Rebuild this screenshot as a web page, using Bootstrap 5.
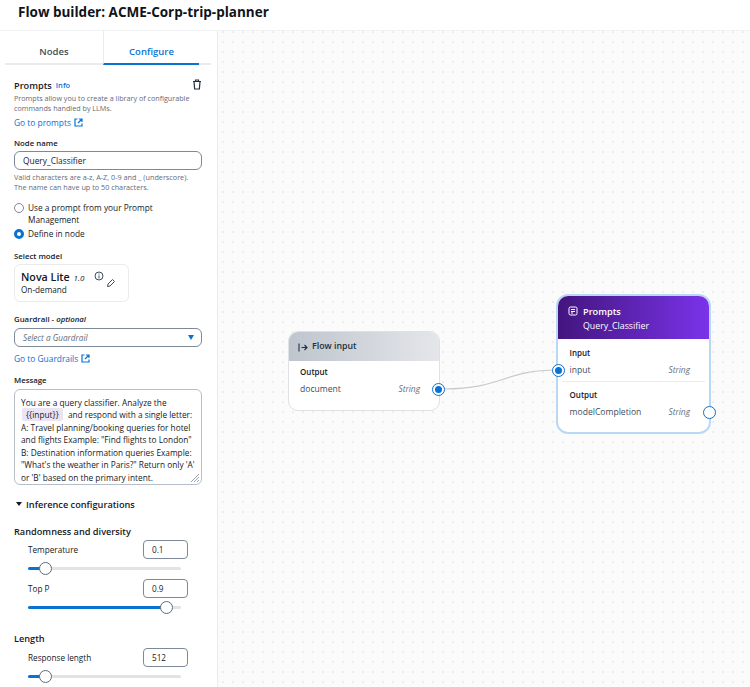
<!DOCTYPE html>
<html lang="en">
<head>
<meta charset="utf-8">
<title>Flow builder</title>
<link href="https://cdn.jsdelivr.net/npm/bootstrap@5.3.0/dist/css/bootstrap.min.css" rel="stylesheet">
<style>
html,body{height:100%;overflow:hidden;}
body{font-family:"Open Sans","Noto Sans",sans-serif;color:#16191f;background:#fff;width:750px;height:687px;position:relative;}
.titlebar{height:31px;padding:1px 0 0 18px;font-size:13.5px;font-weight:700;line-height:22px;color:#0f141a;border-bottom:1px solid #f0f1f2;}
.shell{height:656px;display:flex;overflow:hidden;}
.sidepane{width:218px;flex:none;height:656px;overflow:hidden;border-right:1px solid #e9ebed;padding:0 5px 0 5px;}
.canvasarea{flex:1;position:relative;background-color:#fbfbfb;background-image:radial-gradient(circle,#e2e3e5 .55px,transparent .9px);background-size:10px 10px;background-position:0 -4px;}
.tabrow{display:flex;height:34px;border-bottom:2px solid #e9ebed;font-size:9.5px;font-weight:600;margin-right:1px;}
.tabitem{flex:none;width:98px;text-align:center;padding-top:14px;line-height:14px;color:#414d5c;}
.tabitem.picked{width:96px;color:#0972d3;border-left:1px solid #e9ebed;height:34px;border-bottom:2px solid #0972d3;}
.formbody{padding:0 10px 0 9px;font-size:8.4px;line-height:11px;}
.headline{display:flex;align-items:center;font-size:9.2px;font-weight:600;height:14px;margin-top:13px;}
.infolink{font-size:7.5px;color:#0972d3;margin-left:4px;font-weight:600;}
.trashicon{margin-left:auto;margin-top:-1px;}
.helper{font-size:7.2px;line-height:10px;color:#5f6b7a;margin-top:1px;}
.helper.afterbox{margin-top:2px;font-size:7.25px;}
.linkline{font-size:8.4px;color:#0972d3;line-height:12px;font-weight:500;}
.linkline.first{margin-top:4px;}
.linkline.second{margin-top:6px;}
.linkline svg{vertical-align:-1px;margin-left:1px;}
.fieldlabel{font-size:7.8px;font-weight:600;line-height:10px;}
.gapnine{margin-top:9px;}
.gapten{margin-top:10px;}
.gapeleven{margin-top:11px;}
.gaptwelve{margin-top:12px;}
.namebox{height:19px;margin-top:3px;border:1px solid #7d8998;border-radius:6px;padding:0 8px;font-size:8.4px;line-height:17px;}
.radioline{display:flex;font-size:8.3px;line-height:12px;}
.radiolist{margin-top:10px;}
.radioline.next{margin-top:2px;}
.radiodot{width:10px;height:10px;border-radius:50%;border:1px solid #7d8998;flex:none;margin:1px 4px 0 0;background:#fff;}
.radiodot.on{border:3.2px solid #0972d3;}
.modelcard{width:115px;height:38px;border:1px solid #e9ebed;border-radius:6px;margin-top:3px;padding:6px 6px;position:relative;}
.modelname{font-size:10.7px;font-weight:600;line-height:13px;}
.modelver{font-size:8px;font-style:italic;font-weight:400;margin-left:1px;}
.modelsub{font-size:8.2px;line-height:11px;}
.modelinfo{position:absolute;left:79px;top:6px;}
.modeledit{position:absolute;left:91px;top:13px;}
.selectbox{height:19px;margin-top:4px;border:1px solid #7d8998;border-radius:6px;padding:0 8px;font-size:8.2px;line-height:17px;font-style:italic;color:#5f6b7a;display:flex;align-items:center;justify-content:space-between;}
.caretdown{width:0;height:0;border-left:3.5px solid transparent;border-right:3.5px solid transparent;border-top:5px solid #0972d3;margin-right:-1px;}
.msgbox{height:96px;margin-top:4px;border:1px solid #b6bec9;border-radius:6px;padding:6.5px 6px;font-size:8.3px;line-height:12.6px;color:#16191f;position:relative;white-space:nowrap;overflow:hidden;}
.chipvar{background:#ebe4f5;border-radius:2px;padding:1px 4px;margin-left:1px;margin-right:3px;}
.gripmark{position:absolute;right:1px;bottom:1px;}
.disclosure{display:flex;align-items:center;font-size:9.2px;font-weight:600;margin-top:12px;height:14px;}
.tri{width:0;height:0;border-left:3px solid transparent;border-right:3px solid transparent;border-top:4px solid #16191f;margin:0 4px 0 2px;}
.grouptitle{font-size:9.2px;font-weight:600;line-height:13px;}
.grouptitle.diversity{margin-top:14px;}
.grouptitle.lengthhead{margin-top:23px;}
.sliderblock{padding-left:14px;padding-right:14px;margin-top:1px;}
.sliderblock.lengthblock{margin-top:2px;}
.sliderhead{display:flex;justify-content:space-between;align-items:center;font-size:8.2px;height:20px;}
.sliderhead.next{margin-top:8px;}
.numbox{width:45px;height:19px;border:1px solid #7d8998;border-radius:4px;font-size:8.2px;line-height:17px;padding-left:8px;}
.track{height:3px;background:#e2e3e5;border-radius:2px;position:relative;margin-top:8px;margin-right:7px;}
.trackfill{position:absolute;left:0;top:0;height:3px;background:#0972d3;border-radius:2px;}
.thumb{position:absolute;top:-5px;width:13px;height:13px;margin-left:-6px;border-radius:50%;background:#fff;border:1px solid #5f6b7a;}
/* canvas nodes */
.flownode{position:absolute;background:#fff;font-size:8.6px;}
.inputnode{left:70px;top:300px;width:152px;height:80px;border:1px solid #dfe1e4;border-radius:10px;overflow:hidden;}
.inputhead{height:29px;background:linear-gradient(90deg,#bfc5ce,#e4e6ea);display:flex;align-items:center;padding:1px 0 0 10px;font-size:8.8px;font-weight:600;color:#232f3e;gap:4px;}
.inputhead svg{margin-left:-1px;}
.promptnode{left:338px;top:263px;width:155px;height:140px;border:2.5px solid #b9d8f5;border-radius:12px;overflow:hidden;}
.prompthead{height:43px;background:linear-gradient(90deg,#43157f,#7a33ea);color:#fff;padding:7.5px 10px;font-size:9.2px;line-height:15px;font-weight:600;}
.prompthead svg{vertical-align:-1px;margin-right:5px;}
.promptsub{padding-left:15px;font-weight:500;font-size:8.8px;}
.portsec{padding:0 19px 0 11px;}
.portsec.inputsec{padding-top:6px;}
.portsec.promptin{padding-top:8.5px;padding-left:11.5px;}
.portsec.outputsec{padding-top:8px;padding-left:11.5px;}
.portcap{font-size:8px;font-weight:600;color:#16191f;line-height:10px;}
.portrow{display:flex;justify-content:space-between;color:#414d5c;font-size:8.6px;line-height:12px;margin-top:6px;}
.portrow i{color:#687078;font-size:8.4px;}
.portdiv{height:1px;background:#e9ebed;margin:5px 4px 0 4px;}
.portdot{position:absolute;width:13px;height:13px;border-radius:50%;background:#fff;border:1.5px solid #0972d3;}
.portdot.fill::after{content:"";position:absolute;left:1.7px;top:1.7px;width:7px;height:7px;border-radius:50%;background:#0972d3;}
.portdot.docport{left:214px;top:352px;}
.portdot.inport{left:334px;top:333px;}
.portdot.outport{left:485px;top:375px;}
.wirelayer{position:absolute;left:0;top:0;width:532px;height:656px;}
</style>
</head>
<body>
<div class="titlebar">Flow builder: ACME-Corp-trip-planner</div>
<div class="shell">
  <aside class="sidepane">
    <div class="tabrow">
      <div class="tabitem">Nodes</div>
      <div class="tabitem picked">Configure</div>
    </div>
    <div class="formbody">
      <div class="headline">Prompts <span class="infolink">Info</span>
        <svg class="trashicon" width="10" height="11" viewBox="0 0 10 11" fill="none" stroke="#232f3e" stroke-width="1.2"><path d="M1 2.5h8M3.5 2.5V1h3v1.5M2 2.5l.6 7.5h4.8L8 2.5"/></svg>
      </div>
      <div class="helper">Prompts allow you to create a library of configurable<br>commands handled by LLMs.</div>
      <div class="linkline first">Go to prompts <svg width="9" height="9" viewBox="0 0 9 9" fill="none" stroke="#0972d3" stroke-width="1.2"><path d="M3.5 1H1v7h7V5.5M5 1h3v3M8 1L4 5"/></svg></div>
      <div class="fieldlabel gapnine">Node name</div>
      <div class="namebox">Query_Classifier</div>
      <div class="helper afterbox">Valid characters are a-z, A-Z, 0-9 and _ (underscore).<br>The name can have up to 50 characters.</div>
      <div class="radioline radiolist"><span class="radiodot"></span><span>Use a prompt from your Prompt<br>Management</span></div>
      <div class="radioline next"><span class="radiodot on"></span><span>Define in node</span></div>
      <div class="fieldlabel gapeleven">Select model</div>
      <div class="modelcard">
        <div class="modelname">Nova Lite <span class="modelver">1.0</span></div>
        <div class="modelsub">On-demand</div>
        <svg class="modelinfo" width="10" height="10" viewBox="0 0 10 10" fill="none" stroke="#414d5c" stroke-width="1"><circle cx="5" cy="5" r="4"/><path d="M5 4.5v3M5 2.6v1"/></svg>
        <svg class="modeledit" width="10" height="10" viewBox="0 0 10 10" fill="none" stroke="#414d5c" stroke-width="1"><path d="M1.5 8.5l.5-2.5L6.5 1.5l2 2L4 8z"/></svg>
      </div>
      <div class="fieldlabel gaptwelve">Guardrail - <i>optional</i></div>
      <div class="selectbox"><span>Select a Guardrail</span><span class="caretdown"></span></div>
      <div class="linkline second">Go to Guardrails <svg width="9" height="9" viewBox="0 0 9 9" fill="none" stroke="#0972d3" stroke-width="1.2"><path d="M3.5 1H1v7h7V5.5M5 1h3v3M8 1L4 5"/></svg></div>
      <div class="fieldlabel gapten">Message</div>
      <div class="msgbox">You are a query classifier. Analyze the<br><span class="chipvar">{{input}}</span> and respond with a single letter:<br>A: Travel planning/booking queries for hotel<br>and flights Example: "Find flights to London"<br>B: Destination information queries Example:<br>"What's the weather in Paris?" Return only 'A'<br>or 'B' based on the primary intent.
        <svg class="gripmark" width="10" height="10" viewBox="0 0 10 10" stroke="#7d8998" stroke-width=".8"><path d="M9 1L1 9M9 4L4 9M9 7L7 9"/></svg>
      </div>
      <div class="disclosure"><span class="tri"></span>Inference configurations</div>
      <div class="grouptitle diversity">Randomness and diversity</div>
      <div class="sliderblock">
        <div class="sliderhead"><span>Temperature</span><span class="numbox">0.1</span></div>
        <div class="track"><div class="trackfill" style="width:11%"></div><div class="thumb" style="left:11%"></div></div>
        <div class="sliderhead next"><span>Top P</span><span class="numbox">0.9</span></div>
        <div class="track"><div class="trackfill" style="width:90%"></div><div class="thumb" style="left:90%"></div></div>
      </div>
      <div class="grouptitle lengthhead">Length</div>
      <div class="sliderblock lengthblock">
        <div class="sliderhead"><span>Response length</span><span class="numbox">512</span></div>
        <div class="track"><div class="trackfill" style="width:11%"></div><div class="thumb" style="left:11%"></div></div>
      </div>
    </div>
  </aside>
  <main class="canvasarea">
    <svg class="wirelayer" viewBox="0 0 532 656" fill="none"><path d="M226 358C285 358 285 339 340 339" stroke="#c6cacf" stroke-width="1.2"/></svg>
    <div class="flownode inputnode">
      <div class="inputhead"><svg width="10" height="9" viewBox="0 0 10 9" fill="none" stroke="#232f3e" stroke-width="1.1"><path d="M1 .5v8M3.5 4.5h5.5M6.5 2l2.5 2.5L6.5 7"/></svg>Flow input</div>
      <div class="portsec inputsec">
        <div class="portcap">Output</div>
        <div class="portrow"><span>document</span><i>String</i></div>
      </div>
    </div>
    <div class="portdot fill docport"></div>
    <div class="flownode promptnode">
      <div class="prompthead">
        <svg width="10" height="10" viewBox="0 0 10 10" fill="none" stroke="#fff" stroke-width="1"><rect x="1" y="1" width="8" height="8" rx="1.5"/><path d="M3 3.5h4M3 5.5h4M3 7h2"/></svg>Prompts
        <div class="promptsub">Query_Classifier</div>
      </div>
      <div class="portsec promptin">
        <div class="portcap">Input</div>
        <div class="portrow"><span>input</span><i>String</i></div>
      </div>
      <div class="portdiv"></div>
      <div class="portsec outputsec">
        <div class="portcap">Output</div>
        <div class="portrow"><span>modelCompletion</span><i>String</i></div>
      </div>
    </div>
    <div class="portdot fill inport"></div>
    <div class="portdot outport"></div>
  </main>
</div>
<script src="https://cdn.jsdelivr.net/npm/bootstrap@5.3.0/dist/js/bootstrap.bundle.min.js"></script>
</body>
</html>
